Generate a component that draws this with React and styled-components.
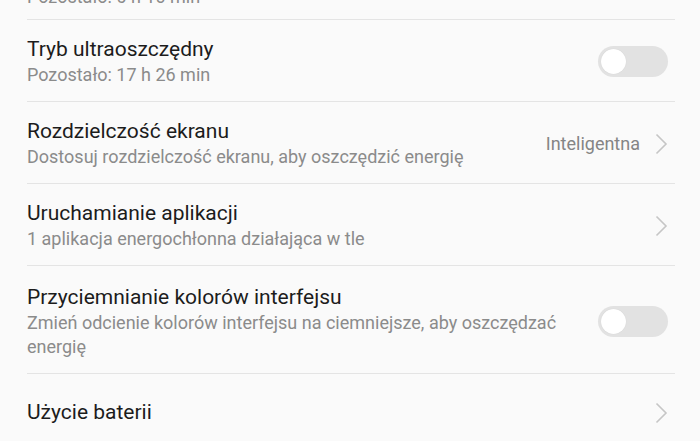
import React from 'react';
import styled, { createGlobalStyle } from 'styled-components';

const GlobalStyle = createGlobalStyle`
    html, body {
        margin: 0;
        padding: 0;
        background: #fafafa;
    }
    body {
        font-family: Roboto, 'Noto Sans', sans-serif;
        -webkit-font-smoothing: antialiased;
    }
`;

const Screen = styled.div`
    width: 700px;
    height: 441px;
    overflow: hidden;
    background: #fafafa;
`;

const List = styled.ul`
    list-style: none;
    margin: -58px 0 0 0;
    padding: 0 25px 0 27px;
`;

const paddings = {
    partial: '16px 0 10px',
    normal: '16px 0 14px',
    tall: '18px 0 14px',
    single: '25px 0 25px',
};

const Item = styled.li`
    display: flex;
    align-items: center;
    gap: 20px;
    padding: ${(props) => paddings[props.$kind]};
    border-bottom: ${(props) => (props.$last ? 'none' : '1px solid #e4e4e4')};
`;

const Text = styled.div`
    flex: 1;
    min-width: 0;
`;

const Title = styled.div`
    font-size: 21px;
    line-height: 27px;
    color: #1c1c1c;
`;

const Subtitle = styled.div`
    font-size: 18px;
    line-height: 24px;
    color: #8b8b8b;
`;

const Trailing = styled.div`
    display: flex;
    align-items: center;
    gap: 15px;
    margin-right: 7px;
`;

const Value = styled.span`
    font-size: 18px;
    color: #858585;
`;

const Track = styled.div`
    width: 70px;
    height: 31px;
    border-radius: 16px;
    background: #e2e2e2;
    display: flex;
    align-items: center;
    padding: 0 3px;
    box-sizing: border-box;
`;

const Knob = styled.div`
    width: 25px;
    height: 25px;
    border-radius: 50%;
    background: #ffffff;
    box-shadow: 0 0 1px rgba(0, 0, 0, 0.12);
`;

const Chevron = () => (
    <svg width="13" height="22" viewBox="0 0 13 22" fill="none">
        <path d="M1.5 1.5 L11 11 L1.5 20.5" stroke="#c6c6c6" strokeWidth="1.6" />
    </svg>
);

const Switch = () => (
    <Track>
        <Knob />
    </Track>
);

const items = [
    { title: 'Tryb oszczędzania energii', sub: ['Pozostało: 6 h 10 min'], control: 'switch', kind: 'partial' },
    { title: 'Tryb ultraoszczędny', sub: ['Pozostało: 17 h 26 min'], control: 'switch', kind: 'normal' },
    {
        title: 'Rozdzielczość ekranu',
        sub: ['Dostosuj rozdzielczość ekranu, aby oszczędzić energię'],
        value: 'Inteligentna',
        control: 'chevron',
        kind: 'normal',
    },
    {
        title: 'Uruchamianie aplikacji',
        sub: ['1 aplikacja energochłonna działająca w tle'],
        control: 'chevron',
        kind: 'normal',
    },
    {
        title: 'Przyciemnianie kolorów interfejsu',
        sub: ['Zmień odcienie kolorów interfejsu na ciemniejsze, aby oszczędzać energię'],
        control: 'switch',
        kind: 'tall',
    },
    { title: 'Użycie baterii', sub: [], control: 'chevron', kind: 'single', last: true },
];

const App = () => (
    <Screen>
        <GlobalStyle />
        <List>
            {items.map((item) => (
                <Item key={item.title} $kind={item.kind} $last={item.last}>
                    <Text>
                        <Title>{item.title}</Title>
                        {item.sub.map((s) => (
                            <Subtitle key={s}>{s}</Subtitle>
                        ))}
                    </Text>
                    <Trailing>
                        {item.value && <Value>{item.value}</Value>}
                        {item.control === 'switch' ? <Switch /> : <Chevron />}
                    </Trailing>
                </Item>
            ))}
        </List>
    </Screen>
);

export default App;
